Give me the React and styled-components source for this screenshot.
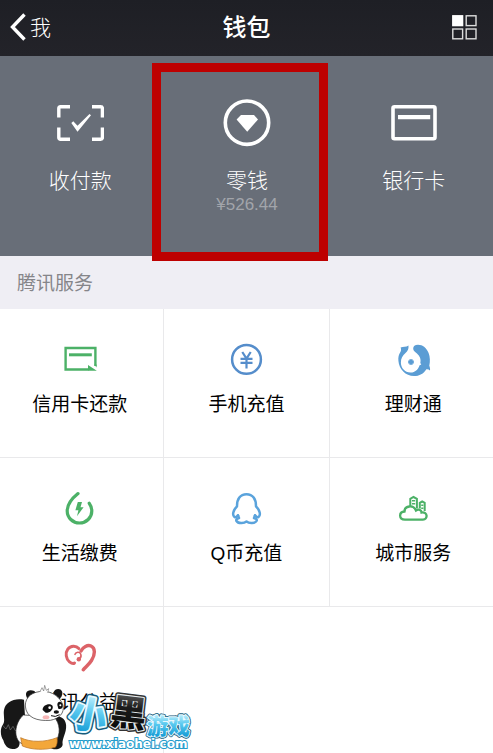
import React from 'react';
import styled, { createGlobalStyle } from 'styled-components';

const GlobalStyle = createGlobalStyle`
  * {
    box-sizing: border-box;
  }
  body {
    margin: 0;
    background: #fff;
    font-family: "Liberation Sans", "Noto Sans CJK SC", sans-serif;
    overflow-x: hidden;
  }
  button {
    margin: 0;
    padding: 0;
    border: 0;
    background: none;
    font-family: inherit;
    cursor: pointer;
  }
`;

const ScanIcon = () => (
  <svg width="48" height="48" viewBox="0 0 48 48" fill="none" stroke="#fff" strokeWidth="3.4">
    <path d="M2.8 18.5V9.5Q2.8 7.7 4.6 7.7H14M36 7.7H44.6Q46.4 7.7 46.4 9.5V18.5M46.4 28.5V38.5Q46.4 40.3 44.6 40.3H36M14 40.3H4.6Q2.8 40.3 2.8 38.5V28.5" />
    <path d="M15.3 24L17.3 22.3L21.5 26.7L33.5 15L35 16.3L21.5 32.7Z" fill="#fff" stroke="none" />
  </svg>
);

const ChangeIcon = () => (
  <svg width="48" height="48" viewBox="0 0 48 48">
    <circle cx="24" cy="23.7" r="21.7" fill="none" stroke="#fff" strokeWidth="3.6" />
    <path d="M18 16H31L35 20.5L24.2 32.8L13.6 20.5Z" fill="#fff" />
  </svg>
);

const BankCardIcon = () => (
  <svg width="48" height="48" viewBox="0 0 48 48">
    <rect x="3" y="7.8" width="42" height="32" rx="1.5" fill="none" stroke="#fff" strokeWidth="3.6" />
    <path d="M8 18.2H40.2" stroke="#fff" strokeWidth="4.2" />
  </svg>
);

const CreditIcon = () => (
  <svg width="40" height="40" viewBox="0 0 40 40">
    <path d="M28.5 30.5H5.6V9H35.4V27" fill="none" stroke="#4cb167" strokeWidth="2.4" />
    <path d="M9 15.8H31.8" stroke="#4cb167" strokeWidth="3" />
    <path d="M28 26L36.8 31.7H28ZM34.2 25.5H36.6V28.4Z" fill="#4cb167" />
  </svg>
);

const TopUpIcon = () => (
  <svg width="40" height="40" viewBox="0 0 40 40" fill="none" stroke="#558dcb" strokeWidth="2.5">
    <circle cx="20.5" cy="20.4" r="14.4" />
    <path d="M16.3 13L20.5 19.6L24.7 13M20.5 19.6V29.6M14.5 19.8H26.5M14.5 23.9H26.5" strokeWidth="2.2" />
  </svg>
);

const WealthIcon = () => (
  <svg width="40" height="40" viewBox="0 0 40 40" fill="#5b9dd4">
    <path d="M15.5 6.5C13 8.4 10.2 7.6 7.6 8.5C8.3 10.2 8.3 11.5 7.4 13C5.7 15.6 5.1 18.4 5.4 21.8C6 30.4 12.5 37 21 37C26.4 37 30.6 34.8 33.4 30.2C34.8 30 36 30.4 37 31.4C37.3 29.6 36.8 28.2 36.3 26.8C37.3 22.5 37.1 18 35.6 14C33.8 9.2 29.8 5.8 25 5.8C21.9 5.8 20.2 7.4 20.2 9.5C20.2 12.8 23.6 13.4 25.8 16.4C27.4 18.7 28 21.2 27.3 24L28.3 25.6L26.6 26.3C25.1 30.7 21.8 33.8 17.4 33.6C11.8 33.3 8 29 7.9 23.7C7.8 19.6 9.6 16.3 12.5 14C14.8 12.1 15.8 10 15.5 6.5Z" />
    <path d="M16.4 20.2H19.6V21.4H20.8V24.6H19.6V25.8H16.4V24.6H15.2V21.4H16.4Z" />
  </svg>
);

const BillsIcon = () => (
  <svg width="40" height="40" viewBox="0 0 40 40">
    <path d="M18 5.6C12.8 9.8 7.2 15.4 7.2 23A12.3 12 0 0 0 31.8 23C31.8 19.8 30.8 17.4 29.2 15.2" fill="none" stroke="#4cb167" strokeWidth="3.2" strokeLinecap="round" />
    <path d="M17.8 14H22L20.5 19.2H23.6L17 28.2L18.4 22.2H15.4Z" fill="#4cb167" />
  </svg>
);

const QCoinIcon = () => (
  <svg width="40" height="40" viewBox="0 0 40 40" fill="none" stroke="#5aa3dc" strokeWidth="2.5" strokeLinecap="round" strokeLinejoin="round">
    <path d="M12 27.4C10.8 28.9 9.6 29.8 8.5 29C6 27 7 22.4 11 18.3C10.9 11 14.2 6.2 20.5 6.2C26.8 6.2 30.1 11 30 18.3C34 22.4 35 27 32.5 29C31.4 29.8 30.2 28.9 29 27.4" />
    <path d="M12 27.4L13 30C10.6 30.6 9.8 31.8 10.5 33C12 35.6 17.8 35.7 20.5 33.6C23.2 35.7 29 35.6 30.5 33C31.2 31.8 30.4 30.6 28 30L29 27.4" />
  </svg>
);

const CityIcon = () => (
  <svg width="40" height="40" viewBox="0 0 40 40" fill="none" stroke="#4cb167" strokeWidth="2.3">
    <path d="M12 31.6C5.6 31.6 5.6 24 11.5 23.5C11.5 17.5 20.5 16.5 23 22.5C25.5 20.8 28.5 22 28.5 24.5C35 23.5 35 31.6 30 31.6Z" />
    <path d="M17.3 18V10.8L20.5 9L23.9 10.8V20.5M26.8 20.5V14.8L29.2 13.5L31.7 14.8V23" strokeWidth="2" />
    <path d="M19 12.8H22.2M19 15.8H22.2M28.2 17.3H30.4M28.2 20.3H30.4" strokeWidth="1.4" />
  </svg>
);

const CharityIcon = () => (
  <svg width="40" height="40" viewBox="0 0 40 40" fill="none" stroke="#dc6368" strokeLinecap="round">
    <path d="M18.8 11.6C16 8.4 10.6 8.6 7.8 12.2C5 16 6 22 9.5 24.8C11.5 26.4 13.5 26.8 14.5 26" strokeWidth="3" />
    <path d="M21 14C23 9.8 27.5 7.6 31 9C35.5 11 35.3 17.5 31.5 23.5C29 27.5 25.5 30 23.2 32.8" strokeWidth="3.4" />
    <path d="M15 17.3C16 14.8 19.5 14.5 20.7 17C21.4 18.8 21 20.5 19.5 21.5" strokeWidth="1.6" />
    <circle cx="18.8" cy="22.2" r="2.2" fill="#dc6368" stroke="none" />
  </svg>
);

const PandaLogo = () => (
  <svg width="200" height="110" viewBox="0 39 600 330">
    <defs>
      <linearGradient id="sky" x1="0" y1="0" x2="0" y2="1">
        <stop offset="0.2" stopColor="#b9ecfb" />
        <stop offset="0.5" stopColor="#59c9ef" />
        <stop offset="0.9" stopColor="#159bd5" />
      </linearGradient>
      <linearGradient id="ink" x1="0" y1="0" x2="0" y2="1">
        <stop offset="0.2" stopColor="#555" />
        <stop offset="0.45" stopColor="#1c1c1c" />
        <stop offset="1" stopColor="#050505" />
      </linearGradient>
    </defs>
    <path d="M72 209C42 203 16 216 12 240C9 257 17 272 8 285C-1 298 2 320 10 331C14 346 23 358 40 357C56 357 61 345 58 332L75 260Z" fill="#171717" />
    <path d="M166 260C192 256 203 278 197 302C192 322 186 330 188 343C187 360 158 363 148 350L143 320Z" fill="#171717" />
    <path d="M70 255C48 275 38 315 59 337C80 354 138 354 164 337C184 316 181 278 161 260Z" fill="#fff" stroke="#222" strokeWidth="2" />
    <path d="M62 323C92 338 135 337 171 323C173 334 171 346 166 352C134 361 96 360 67 348Z" fill="#f3a73a" stroke="#b66b16" strokeWidth="2" />
    <path d="M8 286L18 297L25 284L31 300L39 289L47 303" fill="none" stroke="#777" strokeWidth="2" />
    <path d="M84 208C70 190 82 175 103 183L112 194L93 211Z" fill="#151515" />
    <path d="M160 190C162 174 184 172 187 187C188 197 183 205 177 207Z" fill="#151515" />
    <path d="M76 228C75 200 99 184 129 184C158 184 181 202 189 226C194 249 178 266 151 271C112 274 78 263 76 228Z" fill="#fff" stroke="#222" strokeWidth="2" />
    <path d="M120 185L126 173L131 183L134 166L139 181L146 176L143 188" fill="#fff" stroke="#777" strokeWidth="2" />
    <path d="M128 240C126 225 151 217 158 228C161 241 146 250 137 248Z" fill="#111" />
    <path d="M172 225C172 211 186 214 188 224C190 235 182 239 175 236Z" fill="#111" />
    <circle cx="149" cy="233" r="4" fill="#fff" />
    <circle cx="181" cy="226" r="3" fill="#fff" />
    <ellipse cx="169" cy="246" rx="8" ry="5" fill="#111" />
    <path d="M153 257Q166 263 179 254" fill="none" stroke="#111" strokeWidth="3" />
    <ellipse cx="138" cy="262" rx="10" ry="6" fill="#f7b5b5" />
    <g fontFamily="Noto Sans CJK SC, sans-serif" fontWeight="900" strokeLinejoin="round" paintOrder="stroke">
      <g transform="rotate(12 266 254)" fontSize="112">
        <text x="210" y="296" fill="#155b7b" stroke="#155b7b" strokeWidth="20">小</text>
        <text x="210" y="296" fill="url(#sky)" stroke="#e8f9ff" strokeWidth="11">小</text>
      </g>
      <g transform="rotate(7 385 250)" fontSize="108">
        <text x="332" y="288" fill="#333" stroke="#333" strokeWidth="16">黑</text>
        <text x="332" y="288" fill="url(#ink)" stroke="#e4eaed" strokeWidth="7">黑</text>
      </g>
      <g fontSize="65">
        <text x="440" y="311" fill="#155b7b" stroke="#155b7b" strokeWidth="11">游戏</text>
        <text x="440" y="311" fill="url(#sky)" stroke="#e8f9ff" strokeWidth="6">游戏</text>
      </g>
    </g>
    <text x="207" y="354" fontFamily="DejaVu Sans" fontWeight="700" fontSize="36" fill="#fff" stroke="#239bcb" strokeWidth="6" paintOrder="stroke">www.xiaohei.com</text>
  </svg>
);

const services = [
  { name: '信用卡还款', Icon: CreditIcon },
  { name: '手机充值', Icon: TopUpIcon },
  { name: '理财通', Icon: WealthIcon },
  { name: '生活缴费', Icon: BillsIcon },
  { name: 'Q币充值', Icon: QCoinIcon },
  { name: '城市服务', Icon: CityIcon },
  { name: '腾讯公益', Icon: CharityIcon },
];

function App() {
  return (
    <>
      <GlobalStyle />
      <Page>
        <Header>
          <BackButton>
            <svg width="16" height="28" viewBox="0 0 16 28" fill="none" stroke="#fff" strokeWidth="3.4">
              <path d="M14.5 1.5L2.5 14L14.5 26.5" />
            </svg>
            <span>我</span>
          </BackButton>
          <Title>钱包</Title>
          <MenuButton aria-label="菜单">
            <svg width="25" height="25" viewBox="0 0 25 25" fill="none" stroke="#ddd" strokeWidth="1.4">
              <rect x="0.8" y="0.8" width="9.8" height="9.8" fill="#fff" stroke="#fff" />
              <rect x="14.2" y="0.8" width="9.8" height="9.8" />
              <rect x="0.8" y="14" width="9.8" height="9.8" />
              <rect x="14.2" y="14" width="9.8" height="9.8" />
            </svg>
          </MenuButton>
        </Header>
        <Wallet>
          <Columns>
            <WalletItem>
              <ScanIcon />
              <WalletLabel>收付款</WalletLabel>
            </WalletItem>
            <WalletItem>
              <ChangeIcon />
              <WalletLabel>零钱</WalletLabel>
              <Amount>¥526.44</Amount>
              <Highlight />
            </WalletItem>
            <WalletItem>
              <BankCardIcon />
              <WalletLabel>银行卡</WalletLabel>
            </WalletItem>
          </Columns>
        </Wallet>
        <SectionTitle>腾讯服务</SectionTitle>
        <Columns>
          {services.map(({ name, Icon }) => (
            <Service key={name}>
              <Icon />
              <ServiceLabel>{name}</ServiceLabel>
            </Service>
          ))}
        </Columns>
        <Watermark>
          <PandaLogo />
        </Watermark>
      </Page>
    </>
  );
}

export default App;

const Page = styled.div`
  position: relative;
  height: 100vh;
  overflow: hidden;
`;

const Header = styled.header`
  display: grid;
  grid-template-columns: 1fr auto 1fr;
  align-items: center;
  height: 56px;
  padding: 0 16px 2px;
  background: linear-gradient(#1e1f25, #232329);
  color: #fff;
`;

const BackButton = styled.button`
  display: flex;
  align-items: center;
  gap: 4px;
  justify-self: start;
  margin-left: -6px;
  color: #fff;
  font-size: 21px;
  font-weight: 300;
  line-height: 28px;

  span {
    padding-top: 2px;
  }
`;

const Title = styled.h1`
  margin: 0;
  padding-top: 2px;
  font-size: 24px;
  font-weight: 500;
  line-height: 32px;
`;

const MenuButton = styled.button`
  display: flex;
  justify-self: end;
`;

const Wallet = styled.section`
  background: #686e78;
`;

/* outer columns run slightly past both edges of the screen */
const Columns = styled.div`
  display: grid;
  grid-template-columns: repeat(3, 1fr);
  margin: 0 -4px 0 -3px;
`;

const WalletItem = styled.button`
  position: relative;
  display: flex;
  flex-direction: column;
  align-items: center;
  justify-content: flex-start;
  min-height: 200px;
  padding-top: 43px;
  color: #fff;
`;

const WalletLabel = styled.span`
  margin-top: 22px;
  font-size: 21px;
  font-weight: 300;
  line-height: 24px;
`;

const Amount = styled.span`
  color: #a2a5ab;
  font-size: 17px;
  line-height: 24px;
`;

const Highlight = styled.span`
  position: absolute;
  z-index: 1;
  top: 7px;
  right: 2px;
  bottom: -5px;
  left: -12px;
  border: 9px solid #be0000;
`;

const SectionTitle = styled.h2`
  margin: 0;
  padding: 14px 17px 11px;
  background: #efeef4;
  color: #858589;
  font-size: 19px;
  font-weight: 400;
  line-height: 28px;
`;

const Service = styled.button`
  display: flex;
  flex-direction: column;
  align-items: center;
  justify-content: flex-start;
  min-height: 149px;
  padding-top: 30px;
  border-right: 1px solid #e9e9eb;
  border-bottom: 1px solid #e9e9eb;
  color: #000;
`;

const ServiceLabel = styled.span`
  margin-top: 14px;
  font-size: 19px;
  line-height: 24px;
`;

const Watermark = styled.div`
  position: absolute;
  bottom: 0;
  left: 0;
  display: flex;
`;
